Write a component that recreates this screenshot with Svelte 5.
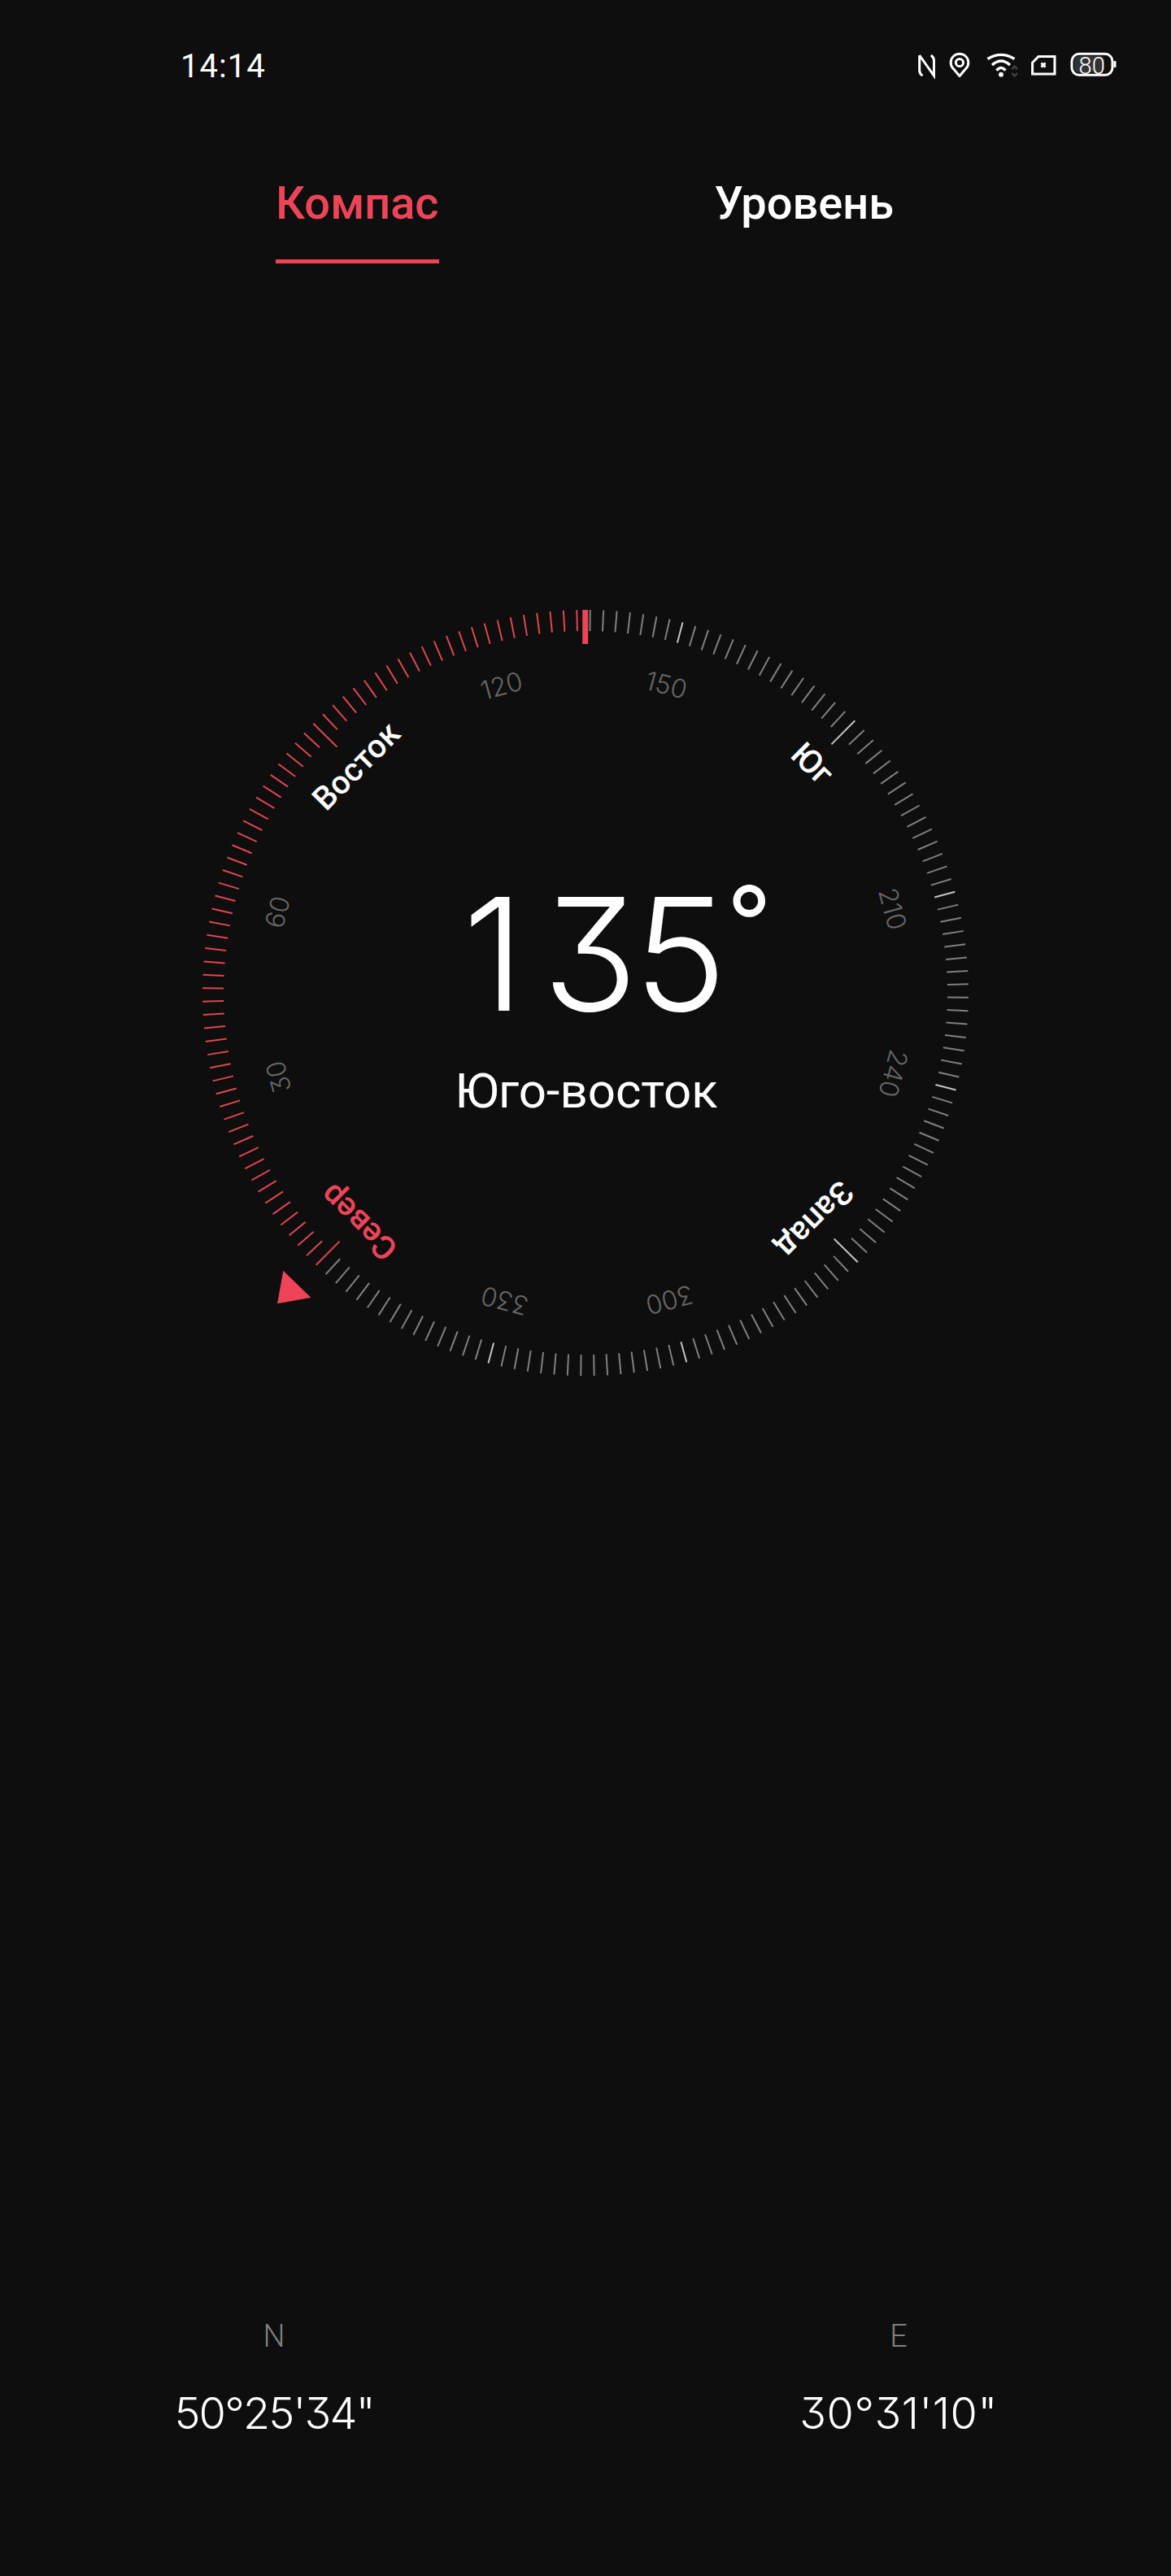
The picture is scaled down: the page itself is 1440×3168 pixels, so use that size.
<script>
  // Compass screen: dial is rotated so that the heading sits under the top marker
  const ROT = 224.7; // where north lands, degrees clockwise from top

  const ticks = Array.from({ length: 180 }, (_, i) => {
    const deg = (i * 2 + 136) % 360;
    const kind = deg % 90 === 0 ? 'major' : deg % 30 === 0 ? 'bright' : 'minor';
    return { deg, angle: 0.7 + i * 2, kind, red: deg <= 134 };
  });

  const compass = [
    { deg: 0, name: 'Север', red: true },
    { deg: 90, name: 'Восток' },
    { deg: 180, name: 'Юг' },
    { deg: 270, name: 'Запад' }
  ];
  const numbers = [30, 60, 120, 150, 210, 240, 300, 330];
</script>

<div class="page">
  <div class="status">
    <span class="time">14:14</span>
    <div class="icons">
      <svg width="26" height="40" viewBox="0 0 26 40" class="ic">
        <path d="M3.7 8V27Q3.7 30.5 7.5 33M3.7 8L21.5 33V14Q21.5 10.5 17.7 8" />
      </svg>
      <svg width="30" height="40" viewBox="0 0 30 40" class="ic">
        <path d="M13 33.5L4.5 23.6A10.8 10.8 0 1 1 21.5 23.6Z" stroke-linejoin="round" />
        <circle cx="13" cy="17" r="4.6" />
      </svg>
      <svg width="42" height="40" viewBox="0 0 42 40" class="ic">
        <path d="M3.5 12.5Q20 2.3 36.5 12.5M9 20Q20 10 31 20M14.5 26.7Q20 20 25.5 26.7" stroke-width="3.4" />
        <circle cx="20" cy="31.7" r="2.9" class="solid" />
        <path d="M33.5 25L36.7 21.5L40 25M33.5 30L36.7 33.5L40 30" class="dim" />
      </svg>
      <svg width="34" height="40" viewBox="0 0 34 40" class="ic">
        <path d="M10 9.6H30V31H2.6V17Z" />
        <path d="M13.5 17.5L18.5 22.5M18.5 17.5L13.5 22.5" />
      </svg>
      <svg width="58" height="40" viewBox="0 0 58 40" class="ic">
        <rect x="3" y="6.3" width="50" height="26" rx="9" />
        <rect x="6" y="9" width="37" height="20" rx="5" class="level" />
        <rect x="54.5" y="15" width="3" height="8" rx="1" class="solid" />
        <text x="27.7" y="31" class="batt">80</text>
      </svg>
    </div>
  </div>

  <div class="tabs">
    <div class="tab on">Компас</div>
    <div class="tab">Уровень</div>
  </div>

  <svg class="dial" width="1000" height="1000" viewBox="-500 -500 1000 1000" role="img" aria-label="Компас">
    {#each ticks as t}
      <line
        x1="0"
        x2="0"
        y1="-471"
        y2={t.kind === 'major' ? -430 : -445}
        transform={`rotate(${t.angle})`}
        class={`tick ${t.kind}`}
        class:red={t.red}
      />
    {/each}

    {#each compass as c}
      <text y="-383" transform={`rotate(${ROT + c.deg})`} class="point" class:red={c.red}>{c.name}</text>
    {/each}
    {#each numbers as n}
      <text y="-380" transform={`rotate(${ROT + n})`} class="num">{n}</text>
    {/each}

    <rect x="-3.8" y="-471" width="7" height="42" class="marker" />
    <polygon points="-371.7,341.7 -337.7,374.7 -379,382.3" class="marker" />

    <text x="-156" y="22" dx="5 10 -17" class="deg">135</text>
    <text x="174" y="-45" class="ring">°</text>
    <text x="1" y="141" class="dir">Юго-восток</text>
  </svg>

  <div class="coords">
    <div class="coord">
      <div class="lbl">N</div>
      <div class="val lat">50°25'34"</div>
    </div>
    <div class="coord">
      <div class="lbl">E</div>
      <div class="val lng">30°31'10"</div>
    </div>
  </div>
</div>

<style>
  :global(body) { margin: 0; background: #0e0e0e; }
  .page { width: 1440px; height: 3168px; background: #0e0e0e; color: #fff; display: flex; flex-direction: column; font-family: Roboto, "Liberation Sans", sans-serif; overflow: hidden; }

  .status { display: flex; justify-content: space-between; align-items: center; height: 40px; margin-top: 60px; padding: 0 67px 0 222px; }
  .time { font-size: 40px; line-height: 40px; letter-spacing: 1px; padding-top: 4px; }
  .icons { display: flex; gap: 14px; }
  .ic { display: block; fill: none; stroke: #fff; stroke-width: 3; }
  .ic .solid { fill: #fff; stroke: none; }
  .ic .dim { stroke: #444; stroke-width: 2.4; }
  .ic .level { fill: #333; stroke: none; }
  .batt { fill: #fff; stroke: none; font-size: 29px; font-weight: 300; text-anchor: middle; }

  .tabs { display: flex; gap: 339px; padding-left: 339px; margin-top: 117px; }
  .tab { font-size: 56px; line-height: 66px; font-weight: 500; padding-bottom: 36px; border-bottom: 5px solid transparent; }
  .tab.on { color: #ee4458; border-bottom-color: #ee4458; }

  .dial { display: block; margin: 397px auto 0; }
  .tick { stroke: #808080; stroke-width: 2; }
  .tick.bright, .tick.major { stroke: #c4c4c4; }
  .tick.red { stroke: #e04552; }
  .point { fill: #fff; font-size: 40px; font-weight: 500; text-anchor: middle; }
  .point.red { fill: #ee4458; }
  .num { fill: #666; font-family: Inter, Roboto, sans-serif; font-size: 32px; font-weight: 300; text-anchor: middle; font-feature-settings: "cv09"; }
  .marker { fill: #ee4458; }
  .deg { fill: #fff; font-family: Inter, Roboto, sans-serif; font-size: 193px; font-weight: 300; letter-spacing: 12px; font-feature-settings: "cv09"; }
  .ring { fill: #fff; font-family: Inter, Roboto, sans-serif; font-size: 120px; font-weight: 400; }
  .dir { fill: #fff; font-size: 60px; text-anchor: middle; }

  .coords { display: flex; gap: 368px; padding: 0 0 168px 137px; margin-top: auto; }
  .coord { width: 400px; text-align: center; }
  .lbl { color: #808080; font-size: 38px; line-height: 44px; font-weight: 300; margin-bottom: 41px; }
  .val { font-family: Inter, Roboto, sans-serif; font-size: 54px; line-height: 64px; font-weight: 300; font-feature-settings: "cv09"; }
  .lat { letter-spacing: -1.8px; }
  .lng { letter-spacing: 0.5px; }
</style>
